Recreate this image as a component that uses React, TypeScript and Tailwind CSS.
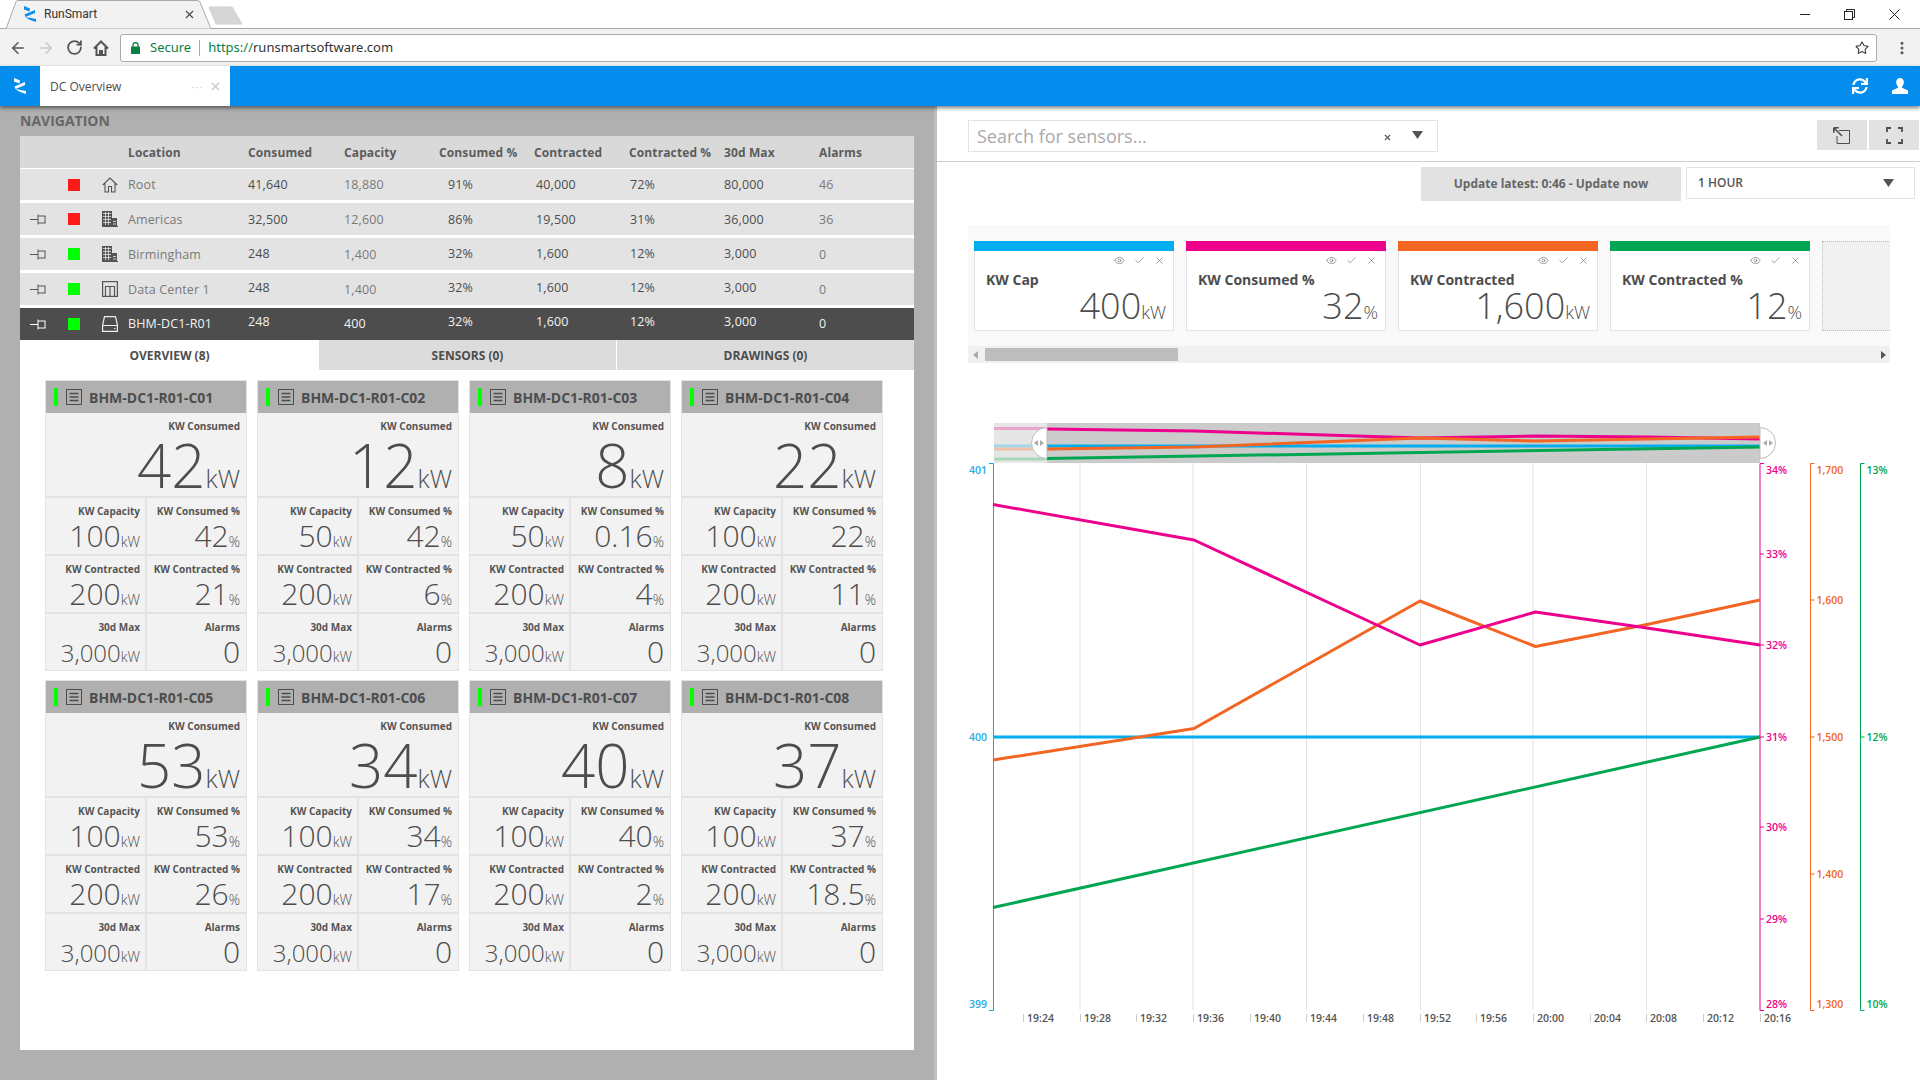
import { FC } from 'react'
import { ArrowLeft, ArrowRight, Check, Eye, MoreVertical, RotateCw, Star, X } from 'lucide-react'
import { FaSync } from 'react-icons/fa'

const Logo: FC<{ color: string; height?: number }> = ({ color, height = 16 }) => (
  <svg width={(height * 12) / 16} height={height} viewBox="0 0 12 16">
    <polygon points="0,0 6,2.500 5.500,5.500 0,3.500" fill={color} />
    <polygon points="0.500,8.500 11,4 11,7 1.500,11" fill={color} />
    <polygon points="1.500,11 12,13 12,16 5,13.500" fill={color} />
  </svg>
)

const PinIcon: FC<{ color: string }> = ({ color }) => (
  <svg width="16" height="11" viewBox="0 0 16 11" fill="none" stroke={color} strokeWidth="1">
    <path d="M0 5.500h8M8 .5v10M8 2h7.500M8 9h7.500M15 2v7" />
  </svg>
)

const HomeGlyph = () => (
  <svg width="16" height="16" viewBox="0 0 16 16" fill="none" stroke="#555" strokeWidth="1.100">
    <path d="M.8 8L8 1l7.200 7M3 6.500V15h3.500V9.500h3V15H13V6.500" />
  </svg>
)

const BuildingGlyph = () => (
  <svg width="16" height="16" viewBox="0 0 16 16">
    <rect x="0" y="0" width="10" height="15" fill="#555" />
    <rect x="10" y="7" width="5" height="8" fill="#555" />
    <rect x="0" y="15" width="16" height="1" fill="#555" />
    <path d="M1 2.500h8M1 5.500h8M1 8.500h8M1 11.500h8M3.500 1v13M6.500 1v13M11 10.500h3M11 13h3" stroke="#e3e3e3" strokeWidth=".8" />
  </svg>
)

const RackGlyph = () => (
  <svg width="16" height="16" viewBox="0 0 16 16" fill="none" stroke="#555" strokeWidth="1.200">
    <rect x=".6" y=".6" width="14.800" height="14.800" />
    <path d="M3.500 15V5.500h9V15M8 5.500V15" />
  </svg>
)

const ServerGlyph = () => (
  <svg width="16" height="16" viewBox="0 0 16 16" fill="none" stroke="#eee" strokeWidth="1.200">
    <path d="M2.500.6h11l1.900 8.400v6.400H.6V9zM.6 9.500h14.800" />
    <path d="M12 12.500h1.500" />
  </svg>
)

const ListGlyph: FC<{ size?: number }> = ({ size = 16 }) => (
  <svg width={size} height={size} viewBox="0 0 16 16" fill="none" stroke="#4d4d4d" strokeWidth="1">
    <rect x=".5" y=".5" width="15" height="15" />
    <path d="M3.500 4.500h9M3.500 8h9M3.500 11.500h9" strokeWidth="1.500" />
  </svg>
)

const Caret = () => (
  <svg width="11" height="8" viewBox="0 0 11 8">
    <polygon points="0,0 11,0 5.500,8" fill="#555" />
  </svg>
)

interface NavRow {
  icon: FC
  pin: boolean
  status: string
  name: string
  values: string[]
  selected?: boolean
  shift: string
  softShift: string
}

const navRows: NavRow[] = [
  { icon: HomeGlyph, pin: false, status: 'bg-[#ff1a1a]', name: 'Root', values: ['41,640', '18,880', '91%', '40,000', '72%', '80,000', '46'], shift: 'translate-y-px', softShift: 'translate-y-px' },
  { icon: BuildingGlyph, pin: true, status: 'bg-[#ff1a1a]', name: 'Americas', values: ['32,500', '12,600', '86%', '19,500', '31%', '36,000', '36'], shift: 'translate-y-px', softShift: 'translate-y-px' },
  { icon: BuildingGlyph, pin: true, status: 'bg-[#00ff00]', name: 'Birmingham', values: ['248', '1,400', '32%', '1,600', '12%', '3,000', '0'], shift: '', softShift: 'translate-y-px' },
  { icon: RackGlyph, pin: true, status: 'bg-[#00ff00]', name: 'Data Center 1', values: ['248', '1,400', '32%', '1,600', '12%', '3,000', '0'], shift: '-translate-y-px', softShift: 'translate-y-px' },
  { icon: ServerGlyph, pin: true, status: 'bg-[#00ff00]', name: 'BHM-DC1-R01', values: ['248', '400', '32%', '1,600', '12%', '3,000', '0'], selected: true, shift: '-translate-y-[2px]', softShift: '' },
]

const navCols = 'grid grid-cols-[108px_120px_96px_95px_95px_95px_95px_95px_1fr] items-center'
const headers = ['Location', 'Consumed', 'Capacity', 'Consumed %', 'Contracted', 'Contracted %', '30d Max', 'Alarms']
const valuePad = ['', '', 'pl-[9px]', 'pl-[2px]', 'pl-[1px]', '', '']

const NavTable = () => (
  <div className="flex flex-col">
    <div className={`${navCols} h-[32px] bg-[#d9d9d9] pt-[1px] text-[12px] font-bold tracking-[0.01em] text-[#5c5c5c]`}>
      <div />
      {headers.map(h => (
        <div key={h} className="whitespace-nowrap">
          {h}
        </div>
      ))}
    </div>
    <div className="mt-[1px] flex flex-col gap-[3px]">
      {navRows.map((row, r) => (
        <div
          key={row.name}
          className={`${navCols} ${r === 0 ? 'h-[31px]' : 'h-[32px]'} ${row.selected ? 'bg-[#4d4d4d] text-[#f2f2f2]' : 'bg-[#e3e3e3] text-[#4d4d4d]'} text-[12.500px] tracking-[0.01em]`}
        >
          <div className="flex items-center">
            <div className="flex w-[48px] pl-[10px]">{row.pin && <PinIcon color={row.selected ? '#fff' : '#555'} />}</div>
            <div className={`h-[12px] w-[12px] ${row.status}`} />
            <div className="ml-[22px]">
              <row.icon />
            </div>
          </div>
          <div className={`whitespace-nowrap ${row.softShift} ${row.selected ? '' : 'text-[#7a7a7a]'}`}>{row.name}</div>
          {row.values.map((v, i) => {
            const soft = i === 1 || i === 6
            return (
              <div key={i} className={`${valuePad[i]} ${soft ? row.softShift : row.shift} ${!row.selected && soft ? 'text-[#7a7a7a]' : ''}`}>
                {v}
              </div>
            )
          })}
        </div>
      ))}
    </div>
  </div>
)

const Metric: FC<{ label: string; value: string; unit?: string; big?: boolean; small?: boolean }> = ({ label, value, unit, big, small }) => (
  <div className={`flex flex-col bg-[#f2f2f2] pr-[6px] text-right text-[#4d4d4d] even:pr-[5px] ${big ? 'col-span-2 h-[83px]' : 'h-[56px]'}`}>
    <div className="pt-[6px] text-[10px] leading-[14px] font-bold whitespace-nowrap text-[#555]">{label}</div>
    <div
      className={`font-light whitespace-nowrap ${big ? 'mt-[2px] text-[60px] leading-[60px]' : small ? 'mt-[4px] text-[24px] leading-[30px]' : 'mt-[2px] text-[30px] leading-[32px]'}`}
    >
      {value}
      {unit && <span className={big ? 'text-[25px]' : 'text-[14px]'}>{unit}</span>}
    </div>
  </div>
)

interface RackCard {
  id: string
  kw: string
  cap: string
  pct: string
  con: string
  cpct: string
}

const rackCards: RackCard[] = [
  { id: 'C01', kw: '42', cap: '100', pct: '42', con: '200', cpct: '21' },
  { id: 'C02', kw: '12', cap: '50', pct: '42', con: '200', cpct: '6' },
  { id: 'C03', kw: '8', cap: '50', pct: '0.16', con: '200', cpct: '4' },
  { id: 'C04', kw: '22', cap: '100', pct: '22', con: '200', cpct: '11' },
  { id: 'C05', kw: '53', cap: '100', pct: '53', con: '200', cpct: '26' },
  { id: 'C06', kw: '34', cap: '100', pct: '34', con: '200', cpct: '17' },
  { id: 'C07', kw: '40', cap: '100', pct: '40', con: '200', cpct: '2' },
  { id: 'C08', kw: '37', cap: '100', pct: '37', con: '200', cpct: '18.5' },
]

const RackTile: FC<{ card: RackCard }> = ({ card }) => (
  <div className="w-[202px] border border-[#e3e3e3] bg-[#e3e3e3]">
    <div className="flex h-[32px] items-center bg-[#b0b0b0] pl-[8px]">
      <div className="h-[18px] w-[4px] bg-[#00ff00]" />
      <div className="ml-[8px]">
        <ListGlyph />
      </div>
      <div className="ml-[7px] text-[14px] font-bold text-[#4d4d4d]">BHM-DC1-R01-{card.id}</div>
    </div>
    <div className="grid grid-cols-2 gap-[2px]">
      <Metric big label="KW Consumed" value={card.kw} unit="kW" />
      <Metric label="KW Capacity" value={card.cap} unit="kW" />
      <Metric label="KW Consumed %" value={card.pct} unit="%" />
      <Metric label="KW Contracted" value={card.con} unit="kW" />
      <Metric label="KW Contracted %" value={card.cpct} unit="%" />
      <Metric small label="30d Max" value="3,000" unit="kW" />
      <Metric label="Alarms" value="0" />
    </div>
  </div>
)

const sensors = [
  { label: 'KW Cap', value: '400', unit: 'kW', bar: 'bg-[#00aeef]' },
  { label: 'KW Consumed %', value: '32', unit: '%', bar: 'bg-[#ec008c]' },
  { label: 'KW Contracted', value: '1,600', unit: 'kW', bar: 'bg-[#f26522]' },
  { label: 'KW Contracted %', value: '12', unit: '%', bar: 'bg-[#00a651]' },
]

const SensorCard: FC<(typeof sensors)[number]> = ({ label, value, unit, bar }) => (
  <div className="flex h-[90px] w-[200px] shrink-0 flex-col border-x border-b border-[#e3e3e3] bg-white">
    <div className={`-mx-px h-[10px] shrink-0 ${bar}`} />
    <div className="flex justify-end gap-[9px] pt-[4px] pr-[8px] text-[#777]">
      <Eye size={11} strokeWidth={1.500} />
      <Check size={11} strokeWidth={1.500} />
      <X size={11} strokeWidth={1.500} />
    </div>
    <div className="mt-[5px] pl-[11px] text-[14px] leading-[18px] font-bold text-[#4d4d4d]">{label}</div>
    <div className="-mt-[4px] pr-[7px] text-right text-[36px] leading-[42px] font-light text-[#4d4d4d]">
      {value}
      <span className="text-[18px]">{unit}</span>
    </div>
  </div>
)

const gridXs = [1080, 1193, 1306.500, 1420.500, 1533, 1646.500]
const timeTicks = [
  [1023, '19:24'], [1080, '19:28'], [1136, '19:32'], [1193, '19:36'], [1250, '19:40'], [1306, '19:44'], [1363, '19:48'],
  [1420, '19:52'], [1476, '19:56'], [1533, '20:00'], [1590, '20:04'], [1646, '20:08'], [1703, '20:12'], [1760, '20:16'],
] as const

const axes = [
  { x: 1760, color: '#ec008c', ticks: [[470, '34%'], [554, '33%'], [645, '32%'], [737, '31%'], [827, '30%'], [919, '29%'], [1004, '28%']] },
  { x: 1810.500, color: '#f26522', ticks: [[470, '1,700'], [600, '1,600'], [737, '1,500'], [874, '1,400'], [1004, '1,300']] },
  { x: 1860.500, color: '#00a651', ticks: [[470, '13%'], [737, '12%'], [1004, '10%']] },
] as const

const Handle: FC<{ x: number; dir: 1 | -1 }> = ({ x, dir }) => (
  <g>
    <path d={`M${x} 427.500A15.500 15.500 0 0 ${dir === 1 ? 1 : 0} ${x} 458.500Z`} fill="#fff" stroke="#bdbdbd" strokeWidth="1" />
    <polygon points={`${x + dir * 8 - 5},443 ${x + dir * 8 - 1},440 ${x + dir * 8 - 1},446`} fill="#aaa" />
    <polygon points={`${x + dir * 8 + 5},443 ${x + dir * 8 + 1},440 ${x + dir * 8 + 1},446`} fill="#aaa" />
  </g>
)

const Chart = () => (
  <svg width="983" height="680" viewBox="937 400 983 680" className="block font-['Open_Sans',sans-serif]">
    <rect x="994" y="423" width="53" height="40" fill="#e6e6e6" />
    <rect x="1047" y="423" width="713" height="40" fill="#cbcbcb" />
    <g fill="none" strokeWidth="3">
      <path d="M994 428.500H1047" stroke="#e8a6cf" />
      <path d="M994 446H1047" stroke="#9fd6ea" />
      <path d="M994 449H1047" stroke="#eec0a8" />
      <path d="M994 459H1047" stroke="#a5d8bb" />
      <path d="M1047 446H1760" stroke="#00aeef" />
      <path d="M1047 429L1194 431L1420 438L1535 436L1647 437L1760 439" stroke="#ec008c" />
      <path d="M1047 449L1194 447L1420 438L1535 441L1647 439L1760 437" stroke="#f26522" />
      <path d="M1047 458.500L1760 447" stroke="#00a651" />
    </g>
    <Handle x={1047} dir={-1} />
    <Handle x={1760} dir={1} />

    {gridXs.map(x => (
      <line key={x} x1={x} x2={x} y1="463" y2="1010" stroke="#e3e3e3" strokeWidth="1" />
    ))}

    <path d="M989 463.500H993.500V1010.500H989" fill="none" stroke="#00aeef" strokeWidth="1" />
    {[[470, '401'], [737, '400'], [1004, '399']].map(([y, t]) => (
      <text key={t} x="987" y={Number(y) + 4} textAnchor="end" fill="#29abe2" className="text-[10.500px] font-semibold">
        {t}
      </text>
    ))}
    {axes.map(a => (
      <g key={a.x}>
        <path d={`M${a.x + 4} 463.500H${a.x}V1010.500H${a.x + 4}`} fill="none" stroke={a.color} strokeWidth="1" />
        {a.ticks.map(([y, t]) => (
          <g key={t}>
            {y !== 470 && y !== 1004 && <line x1={a.x} x2={a.x + 4} y1={y} y2={y} stroke={a.color} strokeWidth="1" />}
            <text x={a.x + 6} y={y + 4} fill={a.color} className="text-[10.500px] font-semibold">
              {t}
            </text>
          </g>
        ))}
      </g>
    ))}

    <g fill="none" strokeWidth="3" strokeLinejoin="round">
      <path d="M993 737H1760" stroke="#00aeef" />
      <path d="M993 907.500L1760 737" stroke="#00a651" />
      <path d="M993 760L1194 728.500L1420 601L1535.500 646.500L1647 624.500L1760 600" stroke="#f26522" />
      <path d="M993 504.500L1194 540L1420 645L1535.500 612L1647 628L1760 645" stroke="#ec008c" />
    </g>

    {timeTicks.map(([x, t]) => (
      <g key={t}>
        <line x1={x + 0.500} x2={x + 0.500} y1="1014" y2="1022" stroke="#ccc" />
        <text x={x + 4} y="1022" fill="#555" className="text-[10.500px] font-semibold">
          {t}
        </text>
      </g>
    ))}
  </svg>
)

const BrowserChrome = () => (
  <div className="font-['Noto_Sans',sans-serif]">
    <div className="relative flex h-[29px] border-b border-[#a9a9a9] bg-white">
      <svg width="212" height="29" viewBox="0 0 212 29" className="absolute top-0 left-[0px]">
        <path d="M6 29L16 1.500Q16.500 .5 18 .5H197Q199 .5 200 2L211 29Z" fill="#f2f2f2" stroke="#a9a9a9" strokeWidth="1" />
      </svg>
      <svg width="36" height="19" viewBox="0 0 36 19" className="absolute top-[6px] left-[208px]">
        <path d="M1 1H24L34 18H8Z" fill="#d6d6d6" stroke="#d0d0d0" strokeLinejoin="round" />
      </svg>
      <div className="relative flex w-[212px] items-center pl-[24px]">
        <Logo color="#0a8fe8" />
        <span className="ml-[8px] font-['Roboto',sans-serif] text-[12px] text-[#333]">RunSmart</span>
        <X size={13} strokeWidth={2} className="absolute left-[183px] text-[#444]" />
      </div>
      <div className="ml-auto flex items-center gap-[34px] pr-[20px] text-[#222]">
        <div className="h-px w-[10px] bg-[#222]" />
        <svg width="11" height="11" viewBox="0 0 11 11" fill="none" stroke="#222">
          <rect x=".5" y="2.500" width="8" height="8" />
          <path d="M2.500 2.500V.5h8v8h-2" />
        </svg>
        <svg width="11" height="11" viewBox="0 0 11 11" stroke="#222" strokeWidth="1">
          <path d="M.5 .5l10 10M10.500 .5l-10 10" />
        </svg>
      </div>
    </div>
    <div className="flex h-[37px] items-center bg-[#f2f2f2] text-[#555]">
      <div className="flex w-[120px] items-center pl-[9px]">
        <ArrowLeft size={18} strokeWidth={2} />
        <ArrowRight size={18} strokeWidth={2} className="ml-[10px] text-[#c8c8c8]" />
        <RotateCw size={17} strokeWidth={2.500} className="ml-[11px]" />
        <svg width="16" height="16" viewBox="0 0 16 16" fill="none" stroke="#555" strokeWidth="2" className="ml-[10px]">
          <path d="M1 8.500L8 1.500l7 7M3.500 7v8h9V7M7 15v-4h2v4" />
        </svg>
      </div>
      <div className="flex h-[28px] w-[1757px] items-center rounded-[3px] border border-[#ababab] bg-white pl-[10px] text-[13px]">
        <svg width="9" height="12" viewBox="0 0 9 12">
          <rect x="0" y="4.500" width="9" height="7.500" fill="#0b8043" />
          <path d="M2 5V3a2.500 2.500 0 0 1 5 0v2" fill="none" stroke="#0b8043" strokeWidth="1.300" />
        </svg>
        <span className="ml-[10px] text-[#0b8043]">Secure</span>
        <span className="mx-[8px] h-[16px] w-px bg-[#aaa]" />
        <span className="text-[#0b8043]">https://</span>
        <span className="text-[#333]">runsmartsoftware.com</span>
        <Star size={14} strokeWidth={2} className="mr-[7px] ml-auto text-[#444]" />
      </div>
      <MoreVertical size={16} strokeWidth={2.500} className="ml-[17px]" />
    </div>
  </div>
)

const AppHeader = () => (
  <div className="relative z-10 flex h-[40px] items-stretch bg-[#058ded] shadow-[0_2px_4px_rgba(0,0,0,0.5)]">
    <div className="flex w-[40px] items-center pl-[14px]">
      <Logo color="#fff" />
    </div>
    <div className="flex w-[190px] items-center bg-white pr-[8px] pl-[10px] text-[12px] text-[#4d4d4d]">
      <span className="mt-[1px]">DC Overview</span>
      <span className="ml-auto text-[11px] leading-none tracking-[1px] text-[#ccc]">···</span>
      <X size={13} strokeWidth={2.500} className="ml-[6px] text-[#ccc]" />
    </div>
    <div className="ml-auto flex items-center gap-[24px] pr-[12px] text-white">
      <FaSync size={16} />
      <svg width="16" height="16" viewBox="0 0 16 16" fill="#fff">
        <path d="M8 0c2.500 0 3.800 1.900 3.800 4.300 0 1.700-.7 3.200-1.700 4.100v1.300L16 12.500V16H0v-3.500l5.900-2.800V8.400C4.900 7.500 4.200 6 4.200 4.300 4.200 1.900 5.500 0 8 0z" />
      </svg>
    </div>
  </div>
)

const App = () => (
  <div className="flex h-[1080px] w-[1920px] flex-col overflow-hidden bg-white font-['Open_Sans',sans-serif]">
    <BrowserChrome />
    <AppHeader />
    <div className="flex min-h-0 flex-1">
      <div className="flex w-[934px] flex-col bg-[#b0b0b0] px-[20px] pb-[30px]">
        <div className="flex h-[30px] items-center pb-[2px] text-[14px] font-bold text-[#666]">NAVIGATION</div>
        <div className="flex-1 bg-white">
          <NavTable />
          <div className="grid h-[30px] grid-cols-[299px_1fr_297px] overflow-hidden text-center text-[12px] leading-[30px] font-bold text-[#4d4d4d]">
            <div className="pt-[1px]">OVERVIEW (8)</div>
            <div className="border-r border-white bg-[#dcdcdc] pt-[1px]">SENSORS (0)</div>
            <div className="bg-[#dcdcdc] pt-[1px]">DRAWINGS (0)</div>
          </div>
          <div className="grid w-fit grid-cols-4 gap-x-[10px] gap-y-[9px] pt-[10px] pl-[25px]">
            {rackCards.map(c => (
              <RackTile key={c.id} card={c} />
            ))}
          </div>
        </div>
      </div>
      <div className="w-[3px] bg-[#bfbfbf]" />
      <div className="flex w-[983px] flex-col">
        <div className="flex h-[56px] shrink-0 items-start border-b border-[#ccc] pt-[14px] pl-[31px]">
          <div className="flex h-[32px] w-[470px] items-center border border-[#e3e3e3] pl-[8px] text-[18px] text-[#aaa]">
            Search for sensors...
            <X size={9} strokeWidth={3} className="mt-[2px] ml-auto text-[#555]" />
            <div className="mr-[14px] ml-[20px] -mt-[2px]">
              <Caret />
            </div>
          </div>
          <div className="ml-auto flex gap-[2px] pr-[1px]">
            <div className="flex h-[30px] w-[50px] items-center justify-center bg-[#e2e2e2] pr-[2px]">
              <svg width="17" height="17" viewBox="0 0 17 17" fill="none" stroke="#4d4d4d" strokeWidth="1">
                <path d="M6 3.500h10.500V16.500H4V9" />
                <path d="M.8 .8L9 9M.8 .8h5M.8 .8v5" strokeWidth="1.600" />
              </svg>
            </div>
            <div className="flex h-[30px] w-[50px] items-center justify-center bg-[#e2e2e2]">
              <svg width="17" height="17" viewBox="0 0 17 17" fill="none" stroke="#4d4d4d" strokeWidth="1.800">
                <path d="M1 5V1h4M12 1h4v4M16 12v4h-4M5 16H1v-4" />
              </svg>
            </div>
          </div>
        </div>
        <div className="flex h-[39px] shrink-0 items-start pt-[5px]">
          <div className="ml-[484px] flex h-[34px] w-[260px] items-center justify-center bg-[#e2e2e2] text-[12px] font-bold text-[#666]">
            Update latest: 0:46 - Update now
          </div>
          <div className="ml-[5px] flex h-[32px] w-[229px] items-center border border-[#e3e3e3] pr-[20px] pl-[11px] text-[12px] font-semibold text-[#555]">
            1 HOUR
            <div className="ml-auto">
              <Caret />
            </div>
          </div>
        </div>
        <div className="mt-[24px] ml-[31px] flex w-[922px] shrink-0 flex-col overflow-hidden bg-[#f9f9f9]">
          <div className="flex gap-[12px] pt-[16px] pl-[6px]">
            {sensors.map(s => (
              <SensorCard key={s.label} {...s} />
            ))}
            <div className="h-[90px] w-[100px] shrink-0 border border-dotted border-[#bbb] bg-[#f0f0f0]" />
          </div>
          <div className="mt-[15px] flex h-[17px] items-center bg-[#f0f0f0] pr-[4px] pl-[5px]">
            <div className="h-0 w-0 border-y-[4px] border-r-[5px] border-y-transparent border-r-[#aaa]" />
            <div className="ml-[7px] h-[13px] w-[193px] bg-[#bdbdbd]" />
            <div className="ml-auto h-0 w-0 border-y-[4px] border-l-[5px] border-y-transparent border-l-[#555]" />
          </div>
        </div>
        <div className="mt-[37px]">
          <Chart />
        </div>
      </div>
    </div>
  </div>
)

export default App
